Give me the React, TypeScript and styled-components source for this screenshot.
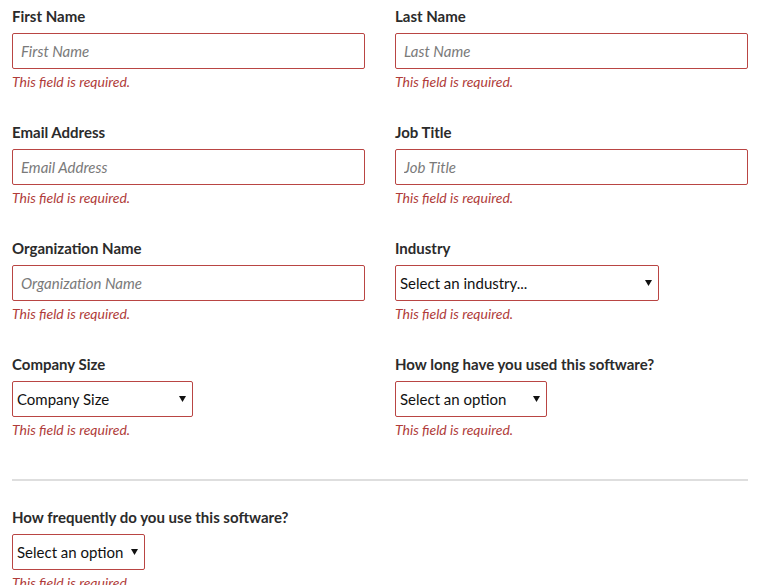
import React from "react";
import styled, { createGlobalStyle } from "styled-components";

const GlobalStyle = createGlobalStyle`
  html, body {
    margin: 0;
    padding: 0;
    background: #ffffff;
  }
  body {
    font-family: Lato, "Liberation Sans", Arial, sans-serif;
    color: #222;
  }
`;

const Form = styled.form`
  padding: 6px 12px 0;
  width: 760px;
  box-sizing: border-box;
`;

const Grid = styled.div`
  display: grid;
  grid-template-columns: 1fr 1fr;
  column-gap: 30px;
  row-gap: 31px;
`;

const Field = styled.div`
  display: flex;
  flex-direction: column;
  align-items: flex-start;
`;

const Label = styled.label`
  font-size: 15px;
  font-weight: 700;
  line-height: 20px;
  color: #2b2b2b;
  margin-bottom: 7px;
`;

const TextInput = styled.input`
  box-sizing: border-box;
  width: 100%;
  height: 36px;
  margin: 0;
  padding: 0 8px;
  border: 1px solid #b94543;
  border-radius: 2px;
  background: #fff;
  font-family: inherit;
  font-size: 15px;
  color: #222;
  outline: none;

  &::placeholder {
    color: #7a7a7a;
    font-style: italic;
  }
`;

const SelectBox = styled.div<{ $w: number }>`
  position: relative;
  width: ${(p) => p.$w}px;
  height: 36px;
`;

const Select = styled.select`
  box-sizing: border-box;
  appearance: none;
  -webkit-appearance: none;
  width: 100%;
  height: 100%;
  margin: 0;
  padding: 0 14px 0 4px;
  border: 1px solid #b94543;
  border-radius: 2px;
  background: #fff;
  font-family: inherit;
  font-size: 15px;
  color: #111;
  outline: none;
`;

const Arrow = styled.svg`
  position: absolute;
  right: 7px;
  top: 15px;
  width: 7px;
  height: 6px;
  pointer-events: none;
`;

const ErrorText = styled.span`
  margin-top: 4px;
  font-size: 14px;
  line-height: 18px;
  font-style: italic;
  color: #b03c3a;
`;

const Divider = styled.hr`
  margin: 40px 0 26px;
  border: 0;
  height: 2px;
  background: #dedede;
`;

const REQUIRED = "This field is required.";

type TextFieldProps = { label: string };

const TextField = ({ label }: TextFieldProps) => (
  <Field>
    <Label>{label}</Label>
    <TextInput type="text" placeholder={label} />
    <ErrorText>{REQUIRED}</ErrorText>
  </Field>
);

type SelectFieldProps = { label: string; placeholder: string; width: number };

const SelectField = ({ label, placeholder, width }: SelectFieldProps) => (
  <Field>
    <Label>{label}</Label>
    <SelectBox $w={width}>
      <Select defaultValue="">
        <option value="">{placeholder}</option>
      </Select>
      <Arrow viewBox="0 0 7 6">
        <path d="M0 0 H7 L3.5 6 Z" fill="#111" />
      </Arrow>
    </SelectBox>
    <ErrorText>{REQUIRED}</ErrorText>
  </Field>
);

export default function App() {
  return (
    <>
      <GlobalStyle />
      <Form onSubmit={(e) => e.preventDefault()}>
        <Grid>
          <TextField label="First Name" />
          <TextField label="Last Name" />
          <TextField label="Email Address" />
          <TextField label="Job Title" />
          <TextField label="Organization Name" />
          <SelectField label="Industry" placeholder="Select an industry..." width={264} />
          <SelectField label="Company Size" placeholder="Company Size" width={181} />
          <SelectField
            label="How long have you used this software?"
            placeholder="Select an option"
            width={152}
          />
        </Grid>
        <Divider />
        <SelectField
          label="How frequently do you use this software?"
          placeholder="Select an option"
          width={133}
        />
      </Form>
    </>
  );
}
